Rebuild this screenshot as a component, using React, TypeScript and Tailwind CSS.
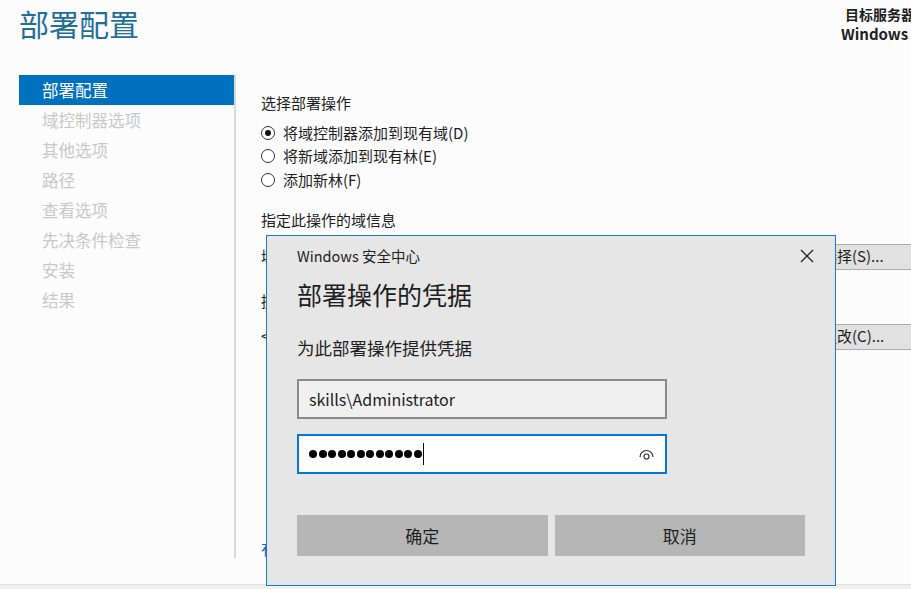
import React from "react";

const font = { fontFamily: '"Noto Sans CJK SC", "Noto Sans", sans-serif' };

const navItems = ["部署配置", "域控制器选项", "其他选项", "路径", "查看选项", "先决条件检查", "安装", "结果"];

function Radio({ checked, label }: { checked?: boolean; label: string }) {
  return (
    <div className="flex h-[23.5px] items-center gap-[8px]">
      <span className="flex h-[14px] w-[14px] items-center justify-center rounded-full border border-[#333] bg-white">
        {checked && <span className="h-[6px] w-[6px] rounded-full bg-[#111]" />}
      </span>
      <span className="text-[15px] text-[#1e1e1e]">{label}</span>
    </div>
  );
}

function EyeIcon() {
  return (
    <svg width="17" height="13" viewBox="0 0 17 13" fill="none" stroke="#333" strokeWidth="1.2">
      <path d="M2 9 A6.5 6.5 0 0 1 15 9" />
      <circle cx="8.5" cy="8.5" r="2.5" />
    </svg>
  );
}

export default function App() {
  return (
    <div className="relative h-[589px] w-[911px] overflow-hidden bg-[#fcfcfc]" style={font}>
      <div className="flex h-[584px] flex-col">
        {/* Header */}
        <div className="flex h-[75px]">
          <div className="flex-1 pl-[19px] pt-[3px] text-[30px] leading-[40px] text-[#1f6f98]">部署配置</div>
          <div className="w-[66px] whitespace-nowrap pt-[4px] font-bold text-[#1e1e1e]">
            <div className="text-[14px] leading-[20px]">目标服务器</div>
            <div className="-ml-[4px] text-[15px] leading-[20px]">Windows Server</div>
          </div>
        </div>

        {/* Body */}
        <div className="flex">
          <div className="ml-[19px] h-[483px] w-[217px] border-r-2 border-[#d9d9d9]">
            {navItems.map((n, i) => (
              <div
                key={n}
                className={
                  i === 0
                    ? "flex h-[30px] items-center bg-[#0071bf] pl-[23px] text-[16.5px] text-white"
                    : "flex h-[30px] items-center pl-[23px] text-[16.5px] text-[#c8c8c8]"
                }
              >
                {n}
              </div>
            ))}
          </div>

          <div className="flex-1 pl-[25px] pt-[17px] text-[15px] text-[#1e1e1e]">
            <div className="leading-[22px]">选择部署操作</div>
            <div className="mt-[7px]">
              <Radio checked label="将域控制器添加到现有域(D)" />
              <Radio label="将新域添加到现有林(E)" />
              <Radio label="添加新林(F)" />
            </div>
            <div className="mt-[17px] leading-[22px]">指定此操作的域信息</div>
            <div className="mt-[13px] flex h-[26px] items-center">
              <span className="w-[120px]">域(O)：</span>
              <div className="flex-1" />
              <div className="-mr-[50px] flex h-[26px] w-[150px] items-center border border-[#adadad] bg-[#e1e1e1] pl-[10px]">选择(S)...</div>
            </div>
            <div className="mt-[20px] leading-[22px]">提供执行此操作所需的凭据</div>
            <div className="mt-[12px] flex h-[26px] items-center">
              <span className="w-[200px]">&lt;未提供凭据&gt;</span>
              <div className="flex-1" />
              <div className="-mr-[50px] flex h-[26px] w-[150px] items-center border border-[#adadad] bg-[#e1e1e1] pl-[10px]">更改(C)...</div>
            </div>
            <div className="mt-[188px] text-[#0066cc]">有关部署配置的详细信息</div>
          </div>
        </div>
      </div>

      {/* Bottom strip */}
      <div className="h-[5px] border-t border-[#e0e0e0] bg-[#f0f0f0]" />

      {/* Credential dialog */}
      <div className="absolute left-[266px] top-[235px] h-[351px] w-[570px] border border-[#1a78c9] bg-[#e6e6e6] px-[30px] text-[#1e1e1e]">
        <div className="flex items-center justify-between pt-[10px]">
          <span className="text-[14.5px] leading-[20px]">Windows 安全中心</span>
          <svg width="14" height="14" viewBox="0 0 14 14" className="mr-[-9px]" stroke="#222" strokeWidth="1.3">
            <path d="M1 1 L13 13 M13 1 L1 13" />
          </svg>
        </div>
        <div className="mt-[12px] text-[25px] leading-[32px]">部署操作的凭据</div>
        <div className="mt-[26px] text-[17.5px] leading-[24px]">为此部署操作提供凭据</div>
        <div className="mt-[19px] flex h-[40px] w-[370px] items-center border-2 border-[#8a8a8a] bg-[#f0f0f0] pl-[10px] text-[16px]">
          skills\Administrator
        </div>
        <div className="mt-[15px] flex h-[40px] w-[370px] items-center border-2 border-[#0078d7] bg-white pl-[10px] pr-[10px]">
          <div className="flex items-center gap-[1.5px]">
            {Array.from({ length: 12 }).map((_, i) => (
              <span key={i} className="h-[8px] w-[8px] rounded-full bg-black" />
            ))}
          </div>
          <span className="ml-[1px] h-[22px] w-[1.5px] bg-black" />
          <div className="flex-1" />
          <EyeIcon />
        </div>
        <div className="mt-[41px] flex gap-[7px]">
          <div className="flex h-[41px] flex-1 items-center justify-center bg-[#b6b6b6] text-[17px]">确定</div>
          <div className="flex h-[41px] flex-1 items-center justify-center bg-[#b6b6b6] text-[17px]">取消</div>
        </div>
      </div>
    </div>
  );
}
